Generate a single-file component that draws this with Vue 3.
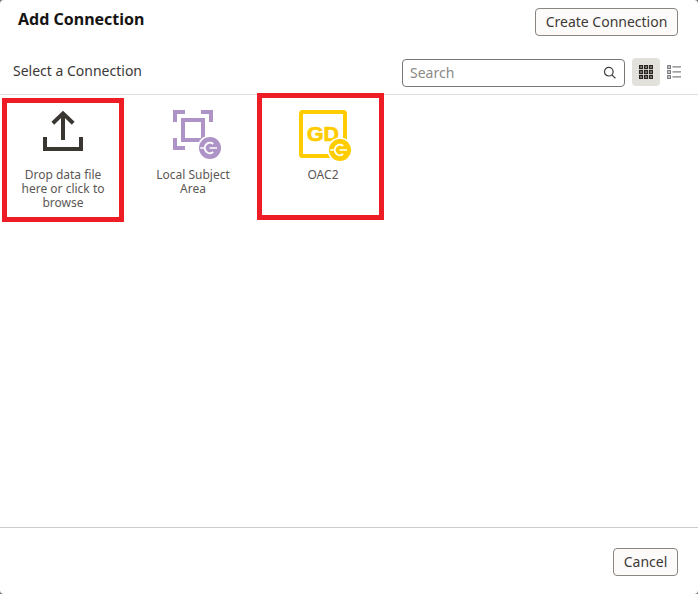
<script setup>
import { ref } from 'vue'

const search = ref('')
const dots = [0, 1, 2].flatMap((r) => [0, 1, 2].map((c) => ({ x: 1 + c * 5, y: 1 + r * 5 })))
</script>

<template>
  <div class="backdrop">
    <section class="dialog">
      <header class="top">
        <h1 class="title">Add Connection</h1>
        <button class="btn create"><span>Create Connection</span></button>
      </header>
      <div class="toolbar">
        <span class="subtitle">Select a Connection</span>
        <label class="search">
          <input v-model="search" placeholder="Search" />
          <svg class="glass" width="14" height="14" viewBox="0 0 14 14" fill="none" stroke="#3f3c39" stroke-width="1.2">
            <circle cx="5.8" cy="5.7" r="4.3" />
            <path d="M8.9 8.9 L12.4 12.2" />
          </svg>
        </label>
        <button class="view active" aria-label="Grid view">
          <svg width="14" height="14" viewBox="0 0 14 14" fill="none" stroke="#282522" stroke-width="1.45">
            <rect v-for="d in dots" :key="`${d.x}-${d.y}`" :x="d.x - 0.3" :y="d.y - 0.3" width="2.7" height="2.7" />
          </svg>
        </button>
        <button class="view" aria-label="List view">
          <svg width="14" height="14" viewBox="0 0 14 14" fill="none" stroke="#77787b" stroke-width="1.2">
            <template v-for="y in [1, 6, 11]" :key="y">
              <rect x="0.7" :y="y - 0.3" width="2.7" height="2.7" />
              <path :d="`M5.5 ${y + 0.9} H14`" />
            </template>
          </svg>
        </button>
      </div>

      <main class="tiles">
        <div class="tile">
          <svg class="icon" width="52" height="52" viewBox="0 0 52 52" fill="none" stroke="#3a3631" stroke-width="4">
            <path d="M8 28 V40 H44 V28" />
            <path d="M26 31 V5" />
            <path d="M15.8 14.2 L26 4.4 L36.2 14.2" />
          </svg>
          <p class="label">Drop data file<br />here or click to<br />browse</p>
          <i class="mark mark-drop"></i>
        </div>
        <div class="tile">
          <svg class="icon" width="52" height="52" viewBox="0 0 52 52">
            <g fill="none" stroke="#ae94c6" stroke-width="4">
              <path d="M8 13 V3 H18" />
              <path d="M34 3 H44 V13" />
              <path d="M8 29 V39 H18" />
              <rect x="16" y="11" width="20" height="20" />
            </g>
            <circle cx="43" cy="39" r="12.6" fill="#fff" />
            <circle cx="43" cy="39" r="11" fill="#ae94c6" />
            <g fill="none" stroke="#fff" stroke-width="1.9">
              <path d="M46.2 34.9 A5.2 5.2 0 1 0 46.2 43.1" />
              <path d="M33.2 39 H37.5 M42.5 39 H50" stroke-width="1.5" />
            </g>
          </svg>
          <p class="label">Local Subject<br />Area</p>
        </div>
        <div class="tile">
          <svg class="icon" width="56" height="54" viewBox="0 0 56 54">
            <rect x="6" y="4" width="44" height="44" rx="1.5" fill="none" stroke="#ffcc00" stroke-width="4" />
            <text x="28" y="32.6" text-anchor="middle" class="gd" textLength="32" lengthAdjust="spacingAndGlyphs">GD</text>
            <circle cx="45" cy="42" r="12.6" fill="#fff" />
            <circle cx="45" cy="42" r="11" fill="#ffcc00" />
            <g fill="none" stroke="#fff" stroke-width="1.9">
              <path d="M48.2 37.9 A5.2 5.2 0 1 0 48.2 46.1" />
              <path d="M35.2 42 H39.5 M44.5 42 H52" stroke-width="1.5" />
            </g>
          </svg>
          <p class="label">OAC2</p>
          <i class="mark mark-oac"></i>
        </div>
      </main>

      <footer class="footer">
        <button class="btn cancel"><span>Cancel</span></button>
      </footer>
    </section>
  </div>
</template>

<style>
body {
  margin: 0;
}
</style>

<style scoped>
* {
  box-sizing: border-box;
}
.backdrop {
  width: 698px;
  height: 594px;
  background: #777;
  overflow: hidden;
}
.dialog {
  height: 594px;
  display: flex;
  flex-direction: column;
  background: #fff;
  border-radius: 4px;
  font-family: "Noto Sans", "Open Sans", sans-serif;
  color: #3c3936;
}
.top {
  height: 58px;
  flex: none;
  display: flex;
  align-items: flex-start;
  justify-content: space-between;
  padding: 8px 20px 0 18px;
}
.title {
  margin: 0;
  font-size: 16px;
  line-height: 22px;
  font-weight: 700;
  color: #161513;
}
.btn {
  height: 28px;
  padding: 0;
  display: flex;
  align-items: center;
  justify-content: center;
  border: 1px solid #8b8580;
  border-radius: 4px;
  background: #fcfbfa;
  font-family: inherit;
  font-size: 14px;
  line-height: 20px;
  color: #3c3936;
}
.create {
  width: 143px;
}
.toolbar {
  height: 37px;
  flex: none;
  display: flex;
  align-items: flex-start;
  padding: 0 10px 0 13px;
  border-bottom: 1px solid #e0dedb;
}
.subtitle {
  flex: 1;
  font-size: 14px;
  line-height: 20px;
  padding-top: 3px;
}
.search {
  width: 223px;
  height: 28px;
  margin-top: 1px;
  margin-right: 7px;
  padding: 0 7px 1px;
  display: flex;
  align-items: center;
  border: 1px solid #7b7672;
  border-radius: 4px;
}
.search input {
  flex: 1;
  min-width: 0;
  padding: 0;
  border: 0;
  outline: 0;
  background: transparent;
  font-family: inherit;
  font-size: 14px;
  color: #302d2a;
}
.search input::placeholder {
  color: #8b8986;
  opacity: 1;
}
.view {
  width: 28px;
  height: 28px;
  padding: 0;
  display: flex;
  align-items: center;
  justify-content: center;
  border: 0;
  border-radius: 4px;
  background: transparent;
}
.view.active {
  background: #e3e1dc;
}
.tiles {
  flex: 1;
  display: grid;
  grid-template-columns: repeat(3, 130px);
  margin-left: -2px;
}
.tile {
  position: relative;
  display: flex;
  flex-direction: column;
  align-items: center;
  padding-top: 13px;
}
.icon {
  height: 54px;
  overflow: visible;
}
.label {
  margin: 6px 0 0;
  text-align: center;
  font-size: 12px;
  line-height: 14px;
  color: #5b5855;
}
.gd {
  font: 700 20.5px "Liberation Sans", sans-serif;
  fill: #ffcc00;
  stroke: #ffcc00;
  stroke-width: 0.7px;
}
.mark {
  position: absolute;
  border: 5px solid #ee1c25;
  pointer-events: none;
}
.mark-drop {
  left: 4px;
  top: 3px;
  width: 122px;
  height: 124px;
}
.mark-oac {
  left: -1px;
  top: -2px;
  width: 127px;
  height: 127px;
}
.footer {
  height: 67px;
  flex: none;
  display: flex;
  justify-content: flex-end;
  align-items: flex-start;
  padding: 20px 20px 0;
  border-top: 1px solid #cfcdcb;
}
.cancel {
  width: 65px;
}
</style>
